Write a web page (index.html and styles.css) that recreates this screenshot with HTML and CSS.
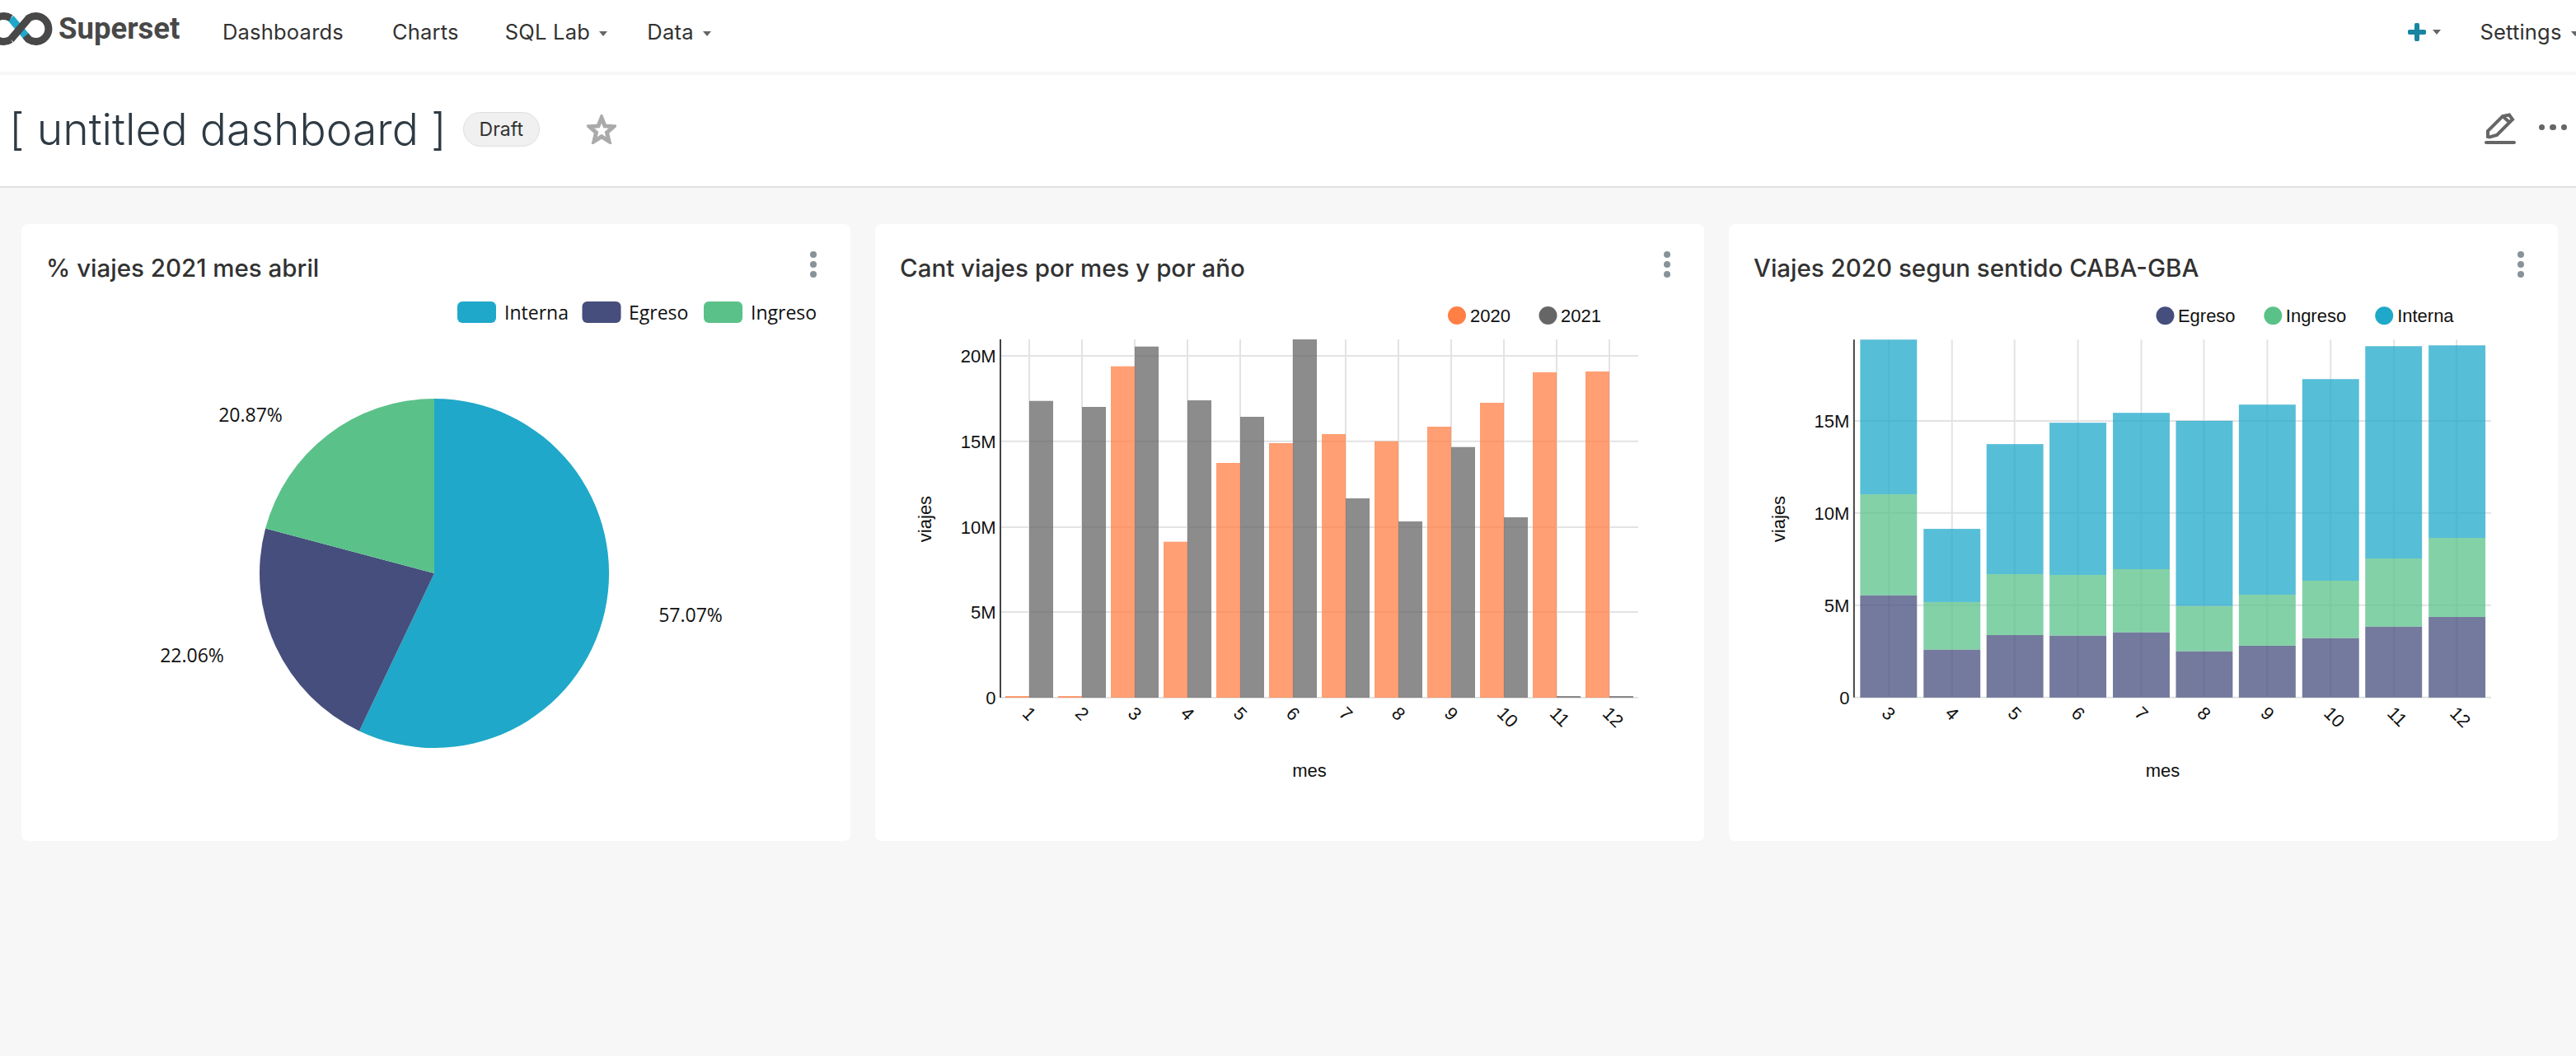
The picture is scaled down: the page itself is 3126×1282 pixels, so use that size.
FILE: index.html
```html
<!DOCTYPE html>
<html lang="en">
<head>
  <meta charset="UTF-8">
  <title>Superset</title>
  <link rel="stylesheet" href="styles.css">
</head>
<body>

  <nav class="navbar">
    <a class="brand">
      <svg class="brand-logo" viewBox="0 0 64 66">
        <path class="logo-blue" d="M13 20L35 46"/>
        <path class="logo-dark" d="M13 46L35 20A15.5 15.5 0 1 1 35 46L31 41.3M13 20A15.5 15.5 0 1 0 13 46"/>
      </svg>
      <span class="brand-name">Superset</span>
    </a>
    <ul class="menu">
      <li class="menu-item item-dashboards">Dashboards</li>
      <li class="menu-item item-charts">Charts</li>
      <li class="menu-item item-sql">SQL Lab <i class="caret"></i></li>
      <li class="menu-item">Data <i class="caret"></i></li>
    </ul>
    <div class="nav-right">
      <span class="plus"><svg viewBox="0 0 22 22"><path d="M11 2.5V19.500M2.500 11H19.500"/></svg><i class="caret"></i></span>
      <span class="menu-item">Settings <i class="caret"></i></span>
    </div>
  </nav>

  <header class="dash-header">
    <div class="dash-title">
      <h1>[ untitled dashboard ]</h1>
      <span class="badge">Draft</span>
      <svg class="star" viewBox="0 0 36 36"><path d="M18 4L22 14L32.500 14.800L24.500 21.800L27 32.500L18 26.800L9 32.500L11.500 21.800L3.500 14.800L14 14Z"/></svg>
    </div>
    <div class="dash-actions">
      <svg class="edit" viewBox="0 0 38 38">
        <path class="edit-pencil" d="M4 29V22L22 4L30 2.500L34 8L15 27L6 29.500ZM23.500 5.500L31 12"/>
        <path class="edit-line" d="M2 36H36"/>
      </svg>
      <span class="dots"><i></i><i></i><i></i></span>
    </div>
  </header>

  <main class="grid">

    <section class="card">
      <div class="card-head">
        <h2>% viajes 2021 mes abril</h2>
        <span class="kebab"><i></i><i></i><i></i></span>
      </div>
      <svg class="chart" viewBox="26 358 1006 663">
        <rect class="fill-blue" x="555" y="366" width="47" height="26" rx="6"/>
        <text class="pie-text" x="612" y="388">Interna</text>
        <rect class="fill-navy" x="706.500" y="366" width="47" height="26" rx="6"/>
        <text class="pie-text" x="763" y="388">Egreso</text>
        <rect class="fill-green" x="854" y="366" width="47" height="26" rx="6"/>
        <text class="pie-text" x="911" y="388">Ingreso</text>

        <path class="fill-blue" d="M527 696L527 484A212 212 0 1 1 435.900 887.400Z"/>
        <path class="fill-navy" d="M527 696L435.900 887.400A212 212 0 0 1 322.100 641.600Z"/>
        <path class="fill-green" d="M527 696L322.100 641.600A212 212 0 0 1 527 484Z"/>

        <text class="pie-text mid" x="304" y="512">20.87%</text>
        <text class="pie-text mid" x="838" y="755">57.07%</text>
        <text class="pie-text mid" x="233" y="804">22.06%</text>
      </svg>
    </section>

    <section class="card">
      <div class="card-head">
        <h2>Cant viajes por mes y por año</h2>
        <span class="kebab"><i></i><i></i><i></i></span>
      </div>
      <svg class="chart" viewBox="1062 358 1006 663">
        <circle class="fill-orange" cx="1768" cy="383" r="11"/>
        <text class="axis-text" x="1784" y="391">2020</text>
        <circle class="fill-gray" cx="1878.500" cy="383" r="11"/>
        <text class="axis-text" x="1894" y="391">2021</text>

        <path class="grid-line" d="M1214 432H1988M1214 535.700H1988M1214 640H1988M1214 743H1988M1214 847H1988"/>
        <path class="grid-line" d="M1249 412V847M1313 412V847M1377 412V847M1441 412V847M1505 412V847M1569 412V847M1633 412V847M1697 412V847M1761 412V847M1825 412V847M1889 412V847M1953 412V847"/>

        <g class="bars fill-orange">
          <rect x="1220" y="845" width="29" height="2"/>
          <rect x="1284" y="845" width="29" height="2"/>
          <rect x="1348" y="444.700" width="29" height="402.300"/>
          <rect x="1412" y="657.700" width="29" height="189.300"/>
          <rect x="1476" y="562" width="29" height="285"/>
          <rect x="1540" y="538" width="29" height="309"/>
          <rect x="1604" y="527" width="29" height="320"/>
          <rect x="1668" y="535.700" width="29" height="311.300"/>
          <rect x="1732" y="518" width="29" height="329"/>
          <rect x="1796" y="489" width="29" height="358"/>
          <rect x="1860" y="452" width="29" height="395"/>
          <rect x="1924" y="451" width="29" height="396"/>
        </g>
        <g class="bars fill-gray">
          <rect x="1249" y="486.700" width="29" height="360.300"/>
          <rect x="1313" y="494" width="29" height="353"/>
          <rect x="1377" y="420.700" width="29" height="426.300"/>
          <rect x="1441" y="486" width="29" height="361"/>
          <rect x="1505" y="506" width="29" height="341"/>
          <rect x="1569" y="412" width="29" height="435"/>
          <rect x="1633" y="605" width="29" height="242"/>
          <rect x="1697" y="633" width="29" height="214"/>
          <rect x="1761" y="542.700" width="29" height="304.300"/>
          <rect x="1825" y="628" width="29" height="219"/>
          <rect x="1889" y="845" width="29" height="2"/>
          <rect x="1953" y="845" width="29" height="2"/>
        </g>
        <path class="axis-line" d="M1214 412V847"/>

        <text class="axis-text end" x="1208.500" y="440">20M</text>
        <text class="axis-text end" x="1208.500" y="544">15M</text>
        <text class="axis-text end" x="1208.500" y="648">10M</text>
        <text class="axis-text end" x="1208.500" y="751">5M</text>
        <text class="axis-text end" x="1208.500" y="855">0</text>

        <g class="axis-text">
          <text transform="translate(1245 862) rotate(45)" dy=".35em">1</text>
          <text transform="translate(1309 862) rotate(45)" dy=".35em">2</text>
          <text transform="translate(1373 862) rotate(45)" dy=".35em">3</text>
          <text transform="translate(1437 862) rotate(45)" dy=".35em">4</text>
          <text transform="translate(1501 862) rotate(45)" dy=".35em">5</text>
          <text transform="translate(1565 862) rotate(45)" dy=".35em">6</text>
          <text transform="translate(1629 862) rotate(45)" dy=".35em">7</text>
          <text transform="translate(1693 862) rotate(45)" dy=".35em">8</text>
          <text transform="translate(1757 862) rotate(45)" dy=".35em">9</text>
          <text transform="translate(1821 862) rotate(45)" dy=".35em">10</text>
          <text transform="translate(1885 862) rotate(45)" dy=".35em">11</text>
          <text transform="translate(1949 862) rotate(45)" dy=".35em">12</text>
        </g>
        <text class="axis-text mid" transform="translate(1122 630) rotate(-90)" dy=".35em">viajes</text>
        <text class="axis-text mid" x="1589" y="943">mes</text>
      </svg>
    </section>

    <section class="card">
      <div class="card-head">
        <h2>Viajes 2020 segun sentido CABA-GBA</h2>
        <span class="kebab"><i></i><i></i><i></i></span>
      </div>
      <svg class="chart" viewBox="2098 358 1007 663">
        <circle class="fill-navy" cx="2628" cy="383" r="11"/>
        <text class="axis-text" x="2643.500" y="391">Egreso</text>
        <circle class="fill-green" cx="2759" cy="383" r="11"/>
        <text class="axis-text" x="2774.500" y="391">Ingreso</text>
        <circle class="fill-blue" cx="2894" cy="383" r="11"/>
        <text class="axis-text" x="2910" y="391">Interna</text>

        <path class="grid-line" d="M2250 510.700H3024M2250 622.700H3024M2250 734.700H3024M2250 847H3024"/>
        <path class="grid-line" d="M2292 412V847M2369 412V847M2445 412V847M2522 412V847M2599 412V847M2675 412V847M2752 412V847M2829 412V847M2906 412V847M2982 412V847"/>

        <g class="bars fill-navy">
          <rect x="2257.500" y="722.700" width="69" height="124.300"/>
          <rect x="2334.500" y="788.700" width="69" height="58.300"/>
          <rect x="2411" y="771" width="69" height="76"/>
          <rect x="2487.500" y="771.700" width="69" height="75.300"/>
          <rect x="2564.500" y="767.700" width="69" height="79.300"/>
          <rect x="2641" y="790.700" width="69" height="56.300"/>
          <rect x="2717.500" y="784" width="69" height="63"/>
          <rect x="2794.500" y="774.700" width="69" height="72.300"/>
          <rect x="2871" y="760.700" width="69" height="86.300"/>
          <rect x="2948" y="749" width="69" height="98"/>
        </g>
        <g class="bars fill-green">
          <rect x="2257.500" y="600" width="69" height="122.700"/>
          <rect x="2334.500" y="731" width="69" height="57.700"/>
          <rect x="2411" y="697" width="69" height="74"/>
          <rect x="2487.500" y="698" width="69" height="73.700"/>
          <rect x="2564.500" y="691" width="69" height="76.700"/>
          <rect x="2641" y="735.700" width="69" height="55"/>
          <rect x="2717.500" y="722" width="69" height="62"/>
          <rect x="2794.500" y="705" width="69" height="69.700"/>
          <rect x="2871" y="678" width="69" height="82.700"/>
          <rect x="2948" y="653" width="69" height="96"/>
        </g>
        <g class="bars fill-blue">
          <rect x="2257.500" y="412" width="69" height="188"/>
          <rect x="2334.500" y="642" width="69" height="89"/>
          <rect x="2411" y="539" width="69" height="158"/>
          <rect x="2487.500" y="513" width="69" height="185"/>
          <rect x="2564.500" y="501" width="69" height="190"/>
          <rect x="2641" y="510.700" width="69" height="225"/>
          <rect x="2717.500" y="491" width="69" height="231"/>
          <rect x="2794.500" y="460" width="69" height="245"/>
          <rect x="2871" y="420" width="69" height="258"/>
          <rect x="2948" y="419" width="69" height="234"/>
        </g>
        <path class="axis-line" d="M2250 412V847"/>

        <text class="axis-text end" x="2244.500" y="519">15M</text>
        <text class="axis-text end" x="2244.500" y="631">10M</text>
        <text class="axis-text end" x="2244.500" y="743">5M</text>
        <text class="axis-text end" x="2244.500" y="855">0</text>

        <g class="axis-text">
          <text transform="translate(2288 862) rotate(45)" dy=".35em">3</text>
          <text transform="translate(2365 862) rotate(45)" dy=".35em">4</text>
          <text transform="translate(2441 862) rotate(45)" dy=".35em">5</text>
          <text transform="translate(2518 862) rotate(45)" dy=".35em">6</text>
          <text transform="translate(2595 862) rotate(45)" dy=".35em">7</text>
          <text transform="translate(2671 862) rotate(45)" dy=".35em">8</text>
          <text transform="translate(2748 862) rotate(45)" dy=".35em">9</text>
          <text transform="translate(2825 862) rotate(45)" dy=".35em">10</text>
          <text transform="translate(2902 862) rotate(45)" dy=".35em">11</text>
          <text transform="translate(2978 862) rotate(45)" dy=".35em">12</text>
        </g>
        <text class="axis-text mid" transform="translate(2158 630) rotate(-90)" dy=".35em">viajes</text>
        <text class="axis-text mid" x="2625" y="943">mes</text>
      </svg>
    </section>

  </main>

</body>
</html>
```

FILE: styles.css
```css
body {
  font-family: Inter, 'Noto Sans', sans-serif;
  background: #f7f7f7;
  color: #323232;
  margin: 0;
  min-height: 100vh;
  overflow: hidden;
}

.navbar {
  height: 77px;
  padding-bottom: 10px;
  background: #fff;
  border-bottom: 4px solid #f7f7f7;
  display: flex;
  align-items: center;
  margin-right: -4px;
}

.brand {
  display: flex;
  align-items: center;
  width: 270px;
  margin-bottom: 8px;
}

.brand-logo {
  width: 64px;
  height: 66px;
  fill: none;
  stroke-width: 9;
}

.logo-blue {
  stroke: #20a7c9;
}

.logo-dark {
  stroke: #484848;
}

.brand-name {
  font-family: Roboto, sans-serif;
  font-weight: 700;
  font-size: 36.5px;
  color: #484848;
  margin-left: 7px;
}

.menu {
  list-style: none;
  display: flex;
  align-items: center;
  gap: 48px;
  margin: 0;
  padding: 0;
  flex: 1;
}

.menu-item {
  font-size: 25.5px;
  letter-spacing: .2px;
  white-space: nowrap;
}

.item-dashboards {
  margin-right: 11px;
}

.item-charts {
  margin-right: 8px;
}

.caret {
  display: inline-block;
  width: 0;
  height: 0;
  border-left: 5px solid transparent;
  border-right: 5px solid transparent;
  border-top: 6px solid #666;
  vertical-align: middle;
  margin-left: 4px;
}

.nav-right {
  display: flex;
  align-items: center;
  gap: 47px;
}

.plus {
  display: flex;
  align-items: center;
  gap: 8px;
}

.plus svg {
  width: 22px;
  height: 22px;
  fill: none;
  stroke: #1a85a0;
  stroke-width: 6;
  stroke-linecap: round;
}

.plus .caret {
  margin-left: 0;
}

.dash-header {
  height: 131px;
  background: #fff;
  border-bottom: 2px solid #e0e0e0;
  display: flex;
  align-items: center;
  justify-content: space-between;
  padding: 0 11px 4px 11px;
}

.dash-title {
  display: flex;
  align-items: center;
}

h1 {
  font-size: 53.5px;
  font-weight: 300;
  color: #2f3b44;
  margin: 0;
}

.badge {
  background: #f0f0f0;
  border: 1px solid #e0e0e0;
  border-radius: 21px;
  font-size: 23px;
  padding: 6px 19px;
  margin-left: 20px;
}

.star {
  width: 36px;
  height: 36px;
  margin-left: 57px;
  fill: none;
  stroke: #aaa;
  stroke-width: 5;
}

.dash-actions {
  display: flex;
  align-items: center;
  gap: 28px;
  margin-bottom: 4px;
}

.edit {
  width: 38px;
  height: 38px;
  margin-top: 2px;
  fill: none;
  stroke: #666;
  stroke-width: 4;
}

.edit-line {
  stroke-linecap: round;
}

.dots {
  display: flex;
  gap: 6px;
}

.dots i {
  width: 7.500px;
  height: 7.500px;
  border-radius: 50%;
  background: #666;
}

.grid {
  display: grid;
  grid-template-columns: repeat(3, 1006px);
  gap: 30px;
  padding: 44px 0 0 26px;
}

.card {
  height: 749px;
  background: #fff;
  border-radius: 8px;
  display: flex;
  flex-direction: column;
}

.card-head {
  height: 86px;
  display: flex;
  justify-content: space-between;
  align-items: flex-start;
  padding: 0 41px 0 30px;
}

h2 {
  font-size: 29.5px;
  font-weight: 500;
  line-height: 34px;
  margin: 36px 0 0;
}

.kebab {
  display: flex;
  flex-direction: column;
  gap: 4px;
  margin-top: 33px;
}

.kebab i {
  width: 8px;
  height: 8px;
  border-radius: 50%;
  background: #879399;
}

.chart {
  display: block;
  width: 100%;
  height: 663px;
}

.fill-blue {
  fill: #1fa8c9;
}

.fill-navy {
  fill: #454e7c;
}

.fill-green {
  fill: #5ac189;
}

.fill-orange {
  fill: #ff7f44;
}

.fill-gray {
  fill: #666;
}

.bars {
  fill-opacity: .75;
}

.grid-line {
  fill: none;
  stroke: #e3e3e3;
  stroke-width: 2;
}

.axis-line {
  fill: none;
  stroke: #444;
  stroke-width: 2;
}

.axis-text {
  font-family: 'Liberation Sans', sans-serif;
  font-size: 22px;
  fill: #111;
}

.pie-text {
  font-family: 'Open Sans', sans-serif;
  font-size: 23px;
  fill: #111;
}

.end {
  text-anchor: end;
}

.mid {
  text-anchor: middle;
}
```
